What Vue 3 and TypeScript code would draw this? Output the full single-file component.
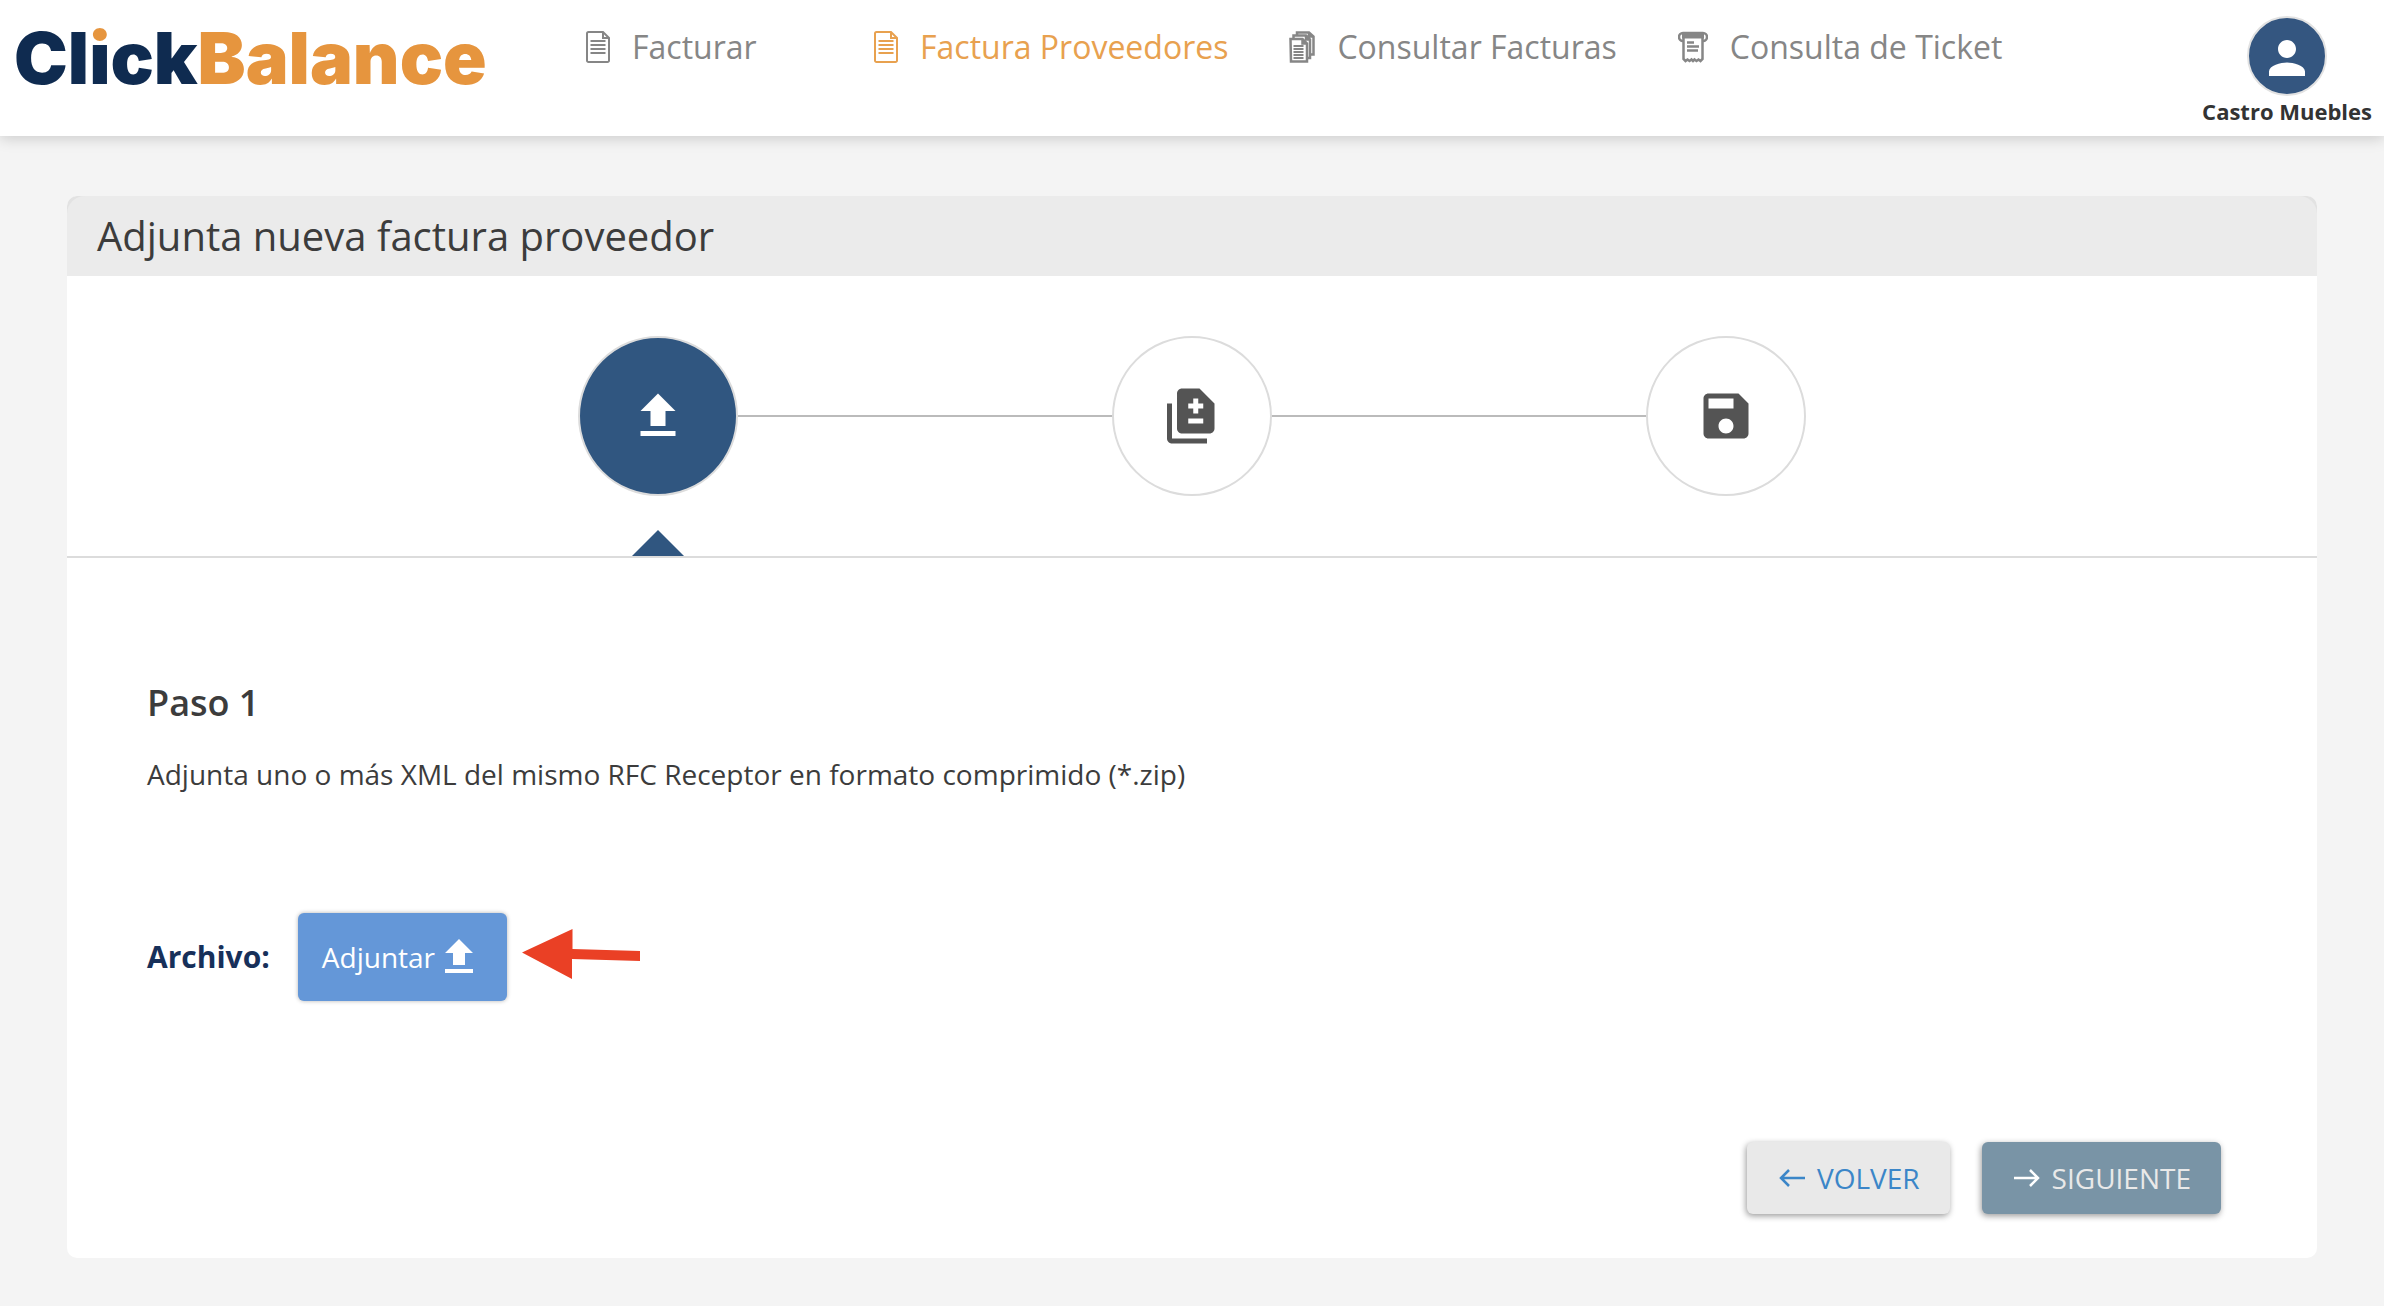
<script setup lang="ts">
interface NavItem {
  label: string
  icon: 'document' | 'copies' | 'ticket'
  active?: boolean
}

interface Step {
  label: string
  path: string
  active?: boolean
}

const navItems: NavItem[] = [
  { label: 'Facturar', icon: 'document' },
  { label: 'Factura Proveedores', icon: 'document', active: true },
  { label: 'Consultar Facturas', icon: 'copies' },
  { label: 'Consulta de Ticket', icon: 'ticket' },
]

const uploadPath = 'M9 16h6v-6h4l-7-7-7 7h4zm-4 2h14v2H5z'

const steps: Step[] = [
  { label: 'Adjuntar', path: uploadPath, active: true },
  {
    label: 'Revisar',
    path: 'M18 23H4c-1.1 0-2-.9-2-2V7h2v14h14v2zM15 1H8c-1.1 0-1.99.9-1.99 2L6 17c0 1.1.89 2 1.99 2H19c1.1 0 2-.9 2-2V7l-6-6zm1.5 14h-6v-2h6v2zm0-6h-2v2h-2V9h-2V7h2V5h2v2h2v2z',
  },
  {
    label: 'Guardar',
    path: 'M17 3H5c-1.11 0-2 .9-2 2v14c0 1.1.89 2 2 2h14c1.1 0 2-.9 2-2V7l-4-4zm-5 16c-1.66 0-3-1.34-3-3s1.34-3 3-3 3 1.34 3 3-1.34 3-3 3zm3-10H5V5h10v4z',
  },
]
</script>

<template>
  <header class="topbar">
    <a class="logo" href="#"><span>Cl<span class="logo-i">i</span>ck</span><span class="logo-accent">Balance</span></a>
    <nav>
      <ul class="nav">
        <li v-for="item in navItems" :key="item.label">
          <a href="#" class="nav-link" :class="{ active: item.active }">
            <svg v-if="item.icon === 'document'" class="nav-icon" viewBox="0 0 24 32" width="24" height="32" aria-hidden="true">
              <path d="M2.5 1H17l6 6v22.5a1.5 1.5 0 0 1-1.5 1.5h-19A1.5 1.5 0 0 1 1 29.5v-27A1.5 1.5 0 0 1 2.5 1zM17 1v6h6" />
              <path d="M4.5 10h15M4.5 14h15M4.5 18h15M4.5 22h15" />
            </svg>
            <svg v-else-if="item.icon === 'copies'" class="nav-icon dense" viewBox="0 0 26 32" width="26" height="32" aria-hidden="true">
              <path d="M1.5 8h12l4.500 4.500V30.500h-16zM13.500 8v4.500H18" />
              <path d="M4.500 8V4.500H17l4 4V27h-3M17 4.500v4h4M8 4.500V1.500H20l4.500 4v18H21M20 1.500v4h4.500" />
              <path d="M4.500 15h10M4.500 18h10M4.500 21h10M4.500 24h10M4.500 27h10" class="thin" />
            </svg>
            <svg v-else class="nav-icon dense" viewBox="0 0 30 32" width="30" height="32" aria-hidden="true">
              <path d="M5 10a4 4 0 0 1-4-4 4 4 0 0 1 4-4h20a4 4 0 0 1 4 4 4 4 0 0 1-4 4" />
              <path d="M4 5h22" class="bold" />
              <path d="M5.500 6v22l2 2 2-1.500 2 1.500 2-1.500 1.500 1.500 1.500-1.500 2 1.500 2-1.500 2 1.500 2-2V6" />
              <path d="M9 11.500h7M9 15.500h12M9 19.500h11" />
            </svg>
            <span>{{ item.label }}</span>
          </a>
        </li>
      </ul>
    </nav>
    <a class="user" href="#">
      <span class="avatar">
        <svg viewBox="0 0 24 24" width="54" height="54" aria-hidden="true">
          <path d="M12 12c2.210 0 4-1.790 4-4s-1.790-4-4-4-4 1.790-4 4 1.790 4 4 4zm0 2c-2.670 0-8 1.340-8 4v2h16v-2c0-2.660-5.330-4-8-4z" />
        </svg>
      </span>
      <span>Castro Muebles</span>
    </a>
  </header>

  <main class="card">
    <div class="card-head"><h1>Adjunta nueva factura proveedor</h1></div>

    <ol class="steps">
      <li v-for="step in steps" :key="step.label" class="step" :class="{ current: step.active }">
        <button type="button" class="step-dot" :aria-label="step.label">
          <svg viewBox="0 0 24 24" width="60" height="60" aria-hidden="true"><path :d="step.path" /></svg>
        </button>
      </li>
    </ol>

    <section class="content">
      <h2>Paso 1</h2>
      <p>Adjunta uno o más XML del mismo RFC Receptor en formato comprimido (*.zip)</p>

      <div class="file-row">
        <label for="attach">Archivo:</label>
        <button id="attach" type="button" class="attach">
          <span>Adjuntar</span>
          <svg viewBox="0 0 24 24" width="48" height="48" aria-hidden="true"><path :d="uploadPath" /></svg>
        </button>
        <svg class="pointer" viewBox="0 0 118 50" width="118" height="50" aria-hidden="true">
          <path d="M0 23.500 50.500 0v20l67.500 2v10l-68-2v20z" />
        </svg>
      </div>

      <div class="actions">
        <button type="button" class="action back">
          <svg viewBox="0 0 26 20" width="26" height="20" aria-hidden="true"><path d="M26 10H2M10 2 2 10l8 8" /></svg>
          <span>VOLVER</span>
        </button>
        <button type="button" class="action next">
          <svg viewBox="0 0 26 20" width="26" height="20" aria-hidden="true"><path d="M0 10h24M16 2l8 8-8 8" /></svg>
          <span>SIGUIENTE</span>
        </button>
      </div>
    </section>
  </main>
</template>

<style>
body {
  background: #f4f4f4;
  color: #3c3c3c;
  font-family: "Open Sans", "Noto Sans", sans-serif;
}
</style>

<style scoped>
h1, h2, p, ul, ol {
  margin: 0;
  padding: 0;
  list-style: none;
}

a {
  text-decoration: none;
}

button {
  font-family: inherit;
  border: 0;
  cursor: pointer;
}

.topbar {
  display: flex;
  align-items: flex-start;
  height: 136px;
  background: #fff;
  box-shadow: 0 2px 14px rgba(0, 0, 0, 0.18);
}

.logo {
  flex: none;
  box-sizing: border-box;
  width: 586px;
  padding: 10px 0 0 14px;
  color: #0f2b50;
  font-family: Inter, "Liberation Sans", sans-serif;
  font-size: 72px;
  font-weight: 900;
  line-height: 96px;
  white-space: nowrap;
}

.logo-accent {
  color: #e6953e;
}

/* two-tone letter: orange dot over a navy stem */
.logo-i {
  background: linear-gradient(#e6953e 32%, #0f2b50 32%);
  background-clip: text;
  -webkit-background-clip: text;
  color: transparent;
}

.nav {
  display: flex;
  gap: 61px;
  padding-top: 25px;
}

.nav li:first-child {
  width: 227px;
}

.nav-link {
  display: flex;
  align-items: center;
  gap: 22px;
  color: #868686;
  font-size: 32px;
  line-height: 44px;
  white-space: nowrap;
}

.nav-link.active {
  color: #e8a14f;
}

.nav-icon {
  fill: none;
  stroke: currentColor;
  stroke-width: 2;
}

.nav-icon.dense {
  stroke-width: 2.5;
}

.nav-icon .thin {
  stroke-width: 2;
}

.nav-icon .bold {
  stroke-width: 5;
}

.user {
  display: flex;
  flex-direction: column;
  align-items: center;
  margin-left: auto;
  padding: 16px 12px 0 0;
  color: #333;
  font-size: 22px;
  font-weight: 700;
  line-height: 30px;
  white-space: nowrap;
}

.avatar {
  display: flex;
  align-items: center;
  justify-content: center;
  box-sizing: border-box;
  width: 80px;
  height: 80px;
  border: 2px solid #e2e2e2;
  border-radius: 50%;
  background: #345680;
}

.avatar svg {
  fill: #fff;
  margin-top: 4px;
}

.card {
  margin: 60px 67px 48px;
  border-radius: 10px;
  background: #fff;
}

.card-head {
  border-radius: 10px 10px 0 0;
  background: #e2e2e2;
}

.card-head h1 {
  padding: 12px 30px;
  border-radius: 18px 18px 0 0;
  background: #ebebeb;
  font-size: 40px;
  font-weight: 400;
  line-height: 56px;
}

.steps {
  display: flex;
  padding: 60px 14.4% 0;
  border-bottom: 2px solid #dcdcdc;
}

.step {
  position: relative;
  display: flex;
  flex: 1;
  justify-content: center;
  padding-bottom: 60px;
}

.step:not(:last-child)::before {
  content: "";
  position: absolute;
  left: 50%;
  top: 79px;
  width: 100%;
  height: 2px;
  background: #bbb;
}

.step.current::after {
  content: "";
  position: absolute;
  bottom: 0;
  left: 50%;
  margin-left: -26px;
  border: 26px solid transparent;
  border-top: 0;
  border-bottom-color: #305680;
}

.step-dot {
  position: relative;
  z-index: 1;
  display: flex;
  align-items: center;
  justify-content: center;
  width: 160px;
  height: 160px;
  padding: 0;
  border: 2px solid #dcdcdc;
  border-radius: 50%;
  background: #fff;
}

.step-dot svg {
  fill: #545454;
}

.current .step-dot {
  background: #305680;
}

.current .step-dot svg {
  fill: #fff;
}

.content {
  padding: 120px 96px 44px 80px;
}

.content h2 {
  font-size: 36px;
  font-weight: 600;
  line-height: 50px;
}

.content p {
  margin-top: 26px;
  font-size: 28px;
  line-height: 40px;
}

.file-row {
  display: flex;
  align-items: center;
  margin-top: 119px;
}

.file-row label {
  color: #17305a;
  font-size: 30px;
  font-weight: 700;
  line-height: 40px;
}

.attach {
  display: flex;
  align-items: center;
  height: 88px;
  margin-left: 28px;
  padding: 0 24px;
  border-radius: 6px;
  background: #6497d8;
  box-shadow: 0 0 4px rgba(0, 0, 0, 0.3);
  color: #fff;
  font-size: 28px;
}

.attach svg {
  fill: #fff;
}

.pointer {
  margin: 0 0 6px 15px;
  fill: #ea4025;
}

.actions {
  display: flex;
  justify-content: flex-end;
  gap: 32px;
  margin-top: 141px;
}

.action {
  display: flex;
  align-items: center;
  gap: 12px;
  height: 72px;
  padding: 0 30px 0 32px;
  border-radius: 6px;
  box-shadow: -1px 2px 6px rgba(0, 0, 0, 0.4);
  font-size: 28px;
}

.action svg {
  fill: none;
  stroke: currentColor;
  stroke-width: 2.5;
}

.back {
  background: #e9e9e9;
  color: #3b86c8;
}

.next {
  background: #7994a6;
  color: #e9e9e9;
}

.next svg {
  stroke: #fff;
}
</style>
